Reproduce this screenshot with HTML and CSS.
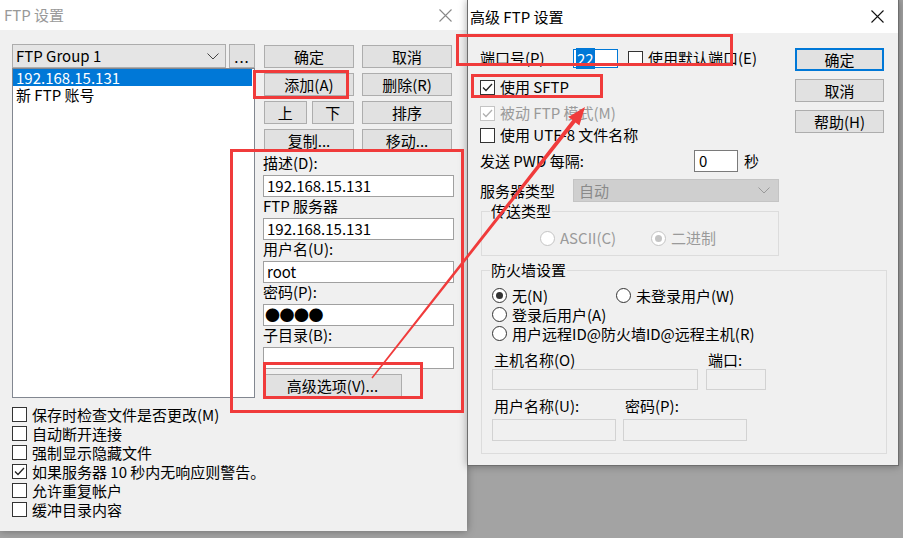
FILE: index.html
```html
<!DOCTYPE html>
<html>
	<head>
		<meta charset="UTF-8" />
		<title>FTP 设置</title>
		<link rel="stylesheet" href="styles.css">
	</head>
	<body>

<div class="win win-main">
  <div class="titlebar inactive">
    <span class="title">FTP 设置</span>
    <svg class="close" width="13" height="13" viewBox="0 0 13 13"><path d="M0.5 0.5 L12.5 12.5 M12.5 0.5 L0.5 12.5" /></svg>
  </div>
  <div class="main-body">
    <div class="main-cols">
      <div class="site-col">
        <div class="combo-row">
          <div class="combo">
            <span>FTP Group 1</span>
            <svg width="12" height="7" viewBox="0 0 12 7"><path d="M0.5 0.5 L6 6 L11.5 0.5" /></svg>
          </div>
          <div class="btn btn-dots">...</div>
        </div>
        <ul class="listbox">
          <li class="sel">192.168.15.131</li>
          <li>新 FTP 账号</li>
        </ul>
      </div>
      <div class="edit-col">
        <div class="btn-grid">
          <div class="btn">确定</div>
          <div class="btn">取消</div>
          <div class="btn">添加(A)</div>
          <div class="btn">删除(R)</div>
          <div class="btn-pair">
            <div class="btn">上</div>
            <div class="btn">下</div>
          </div>
          <div class="btn">排序</div>
          <div class="btn">复制...</div>
          <div class="btn">移动...</div>
        </div>
        <div class="fields">
          <div class="field-label">描述(D):</div>
          <div class="field-input">192.168.15.131</div>
          <div class="field-label">FTP 服务器</div>
          <div class="field-input">192.168.15.131</div>
          <div class="field-label">用户名(U):</div>
          <div class="field-input">root</div>
          <div class="field-label">密码(P):</div>
          <div class="field-input pw">●●●●</div>
          <div class="field-label">子目录(B):</div>
          <div class="field-input"></div>
          <div class="btn btn-adv">高级选项(V)...</div>
        </div>
      </div>
    </div>
    <div class="opts">
      <div class="chk"><span class="box"></span>保存时检查文件是否更改(M)</div>
      <div class="chk"><span class="box"></span>自动断开连接</div>
      <div class="chk"><span class="box"></span>强制显示隐藏文件</div>
      <div class="chk"><span class="box on"><svg width="13" height="13" viewBox="0 0 13 13"><path d="M2 6.5 L5 9.5 L11 3" /></svg></span>如果服务器 10 秒内无响应则警告。</div>
      <div class="chk"><span class="box"></span>允许重复帐户</div>
      <div class="chk"><span class="box"></span>缓冲目录内容</div>
    </div>
  </div>
</div>

<div class="win win-adv">
  <div class="titlebar adv-titlebar">
    <span class="title">高级 FTP 设置</span>
    <svg class="close" width="13" height="13" viewBox="0 0 13 13"><path d="M0.5 0.5 L12.5 12.5 M12.5 0.5 L0.5 12.5" /></svg>
  </div>
  <div class="adv-body">
    <div class="adv-top">
      <div class="adv-left">
        <div class="row r-port">
          <span class="lbl-93">端口号(P)</span>
          <span class="port-input"><span class="hl">22</span></span>
          <span class="chk inline"><span class="box"></span>使用默认端口(E)</span>
        </div>
        <div class="row r-sftp">
          <span class="chk"><span class="box on"><svg width="13" height="13" viewBox="0 0 13 13"><path d="M2 6.5 L5 9.5 L11 3" /></svg></span>使用 SFTP</span>
        </div>
        <div class="row r-pasv">
          <span class="chk dis"><span class="box on"><svg width="13" height="13" viewBox="0 0 13 13"><path d="M2 6.5 L5 9.5 L11 3" /></svg></span>被动 FTP 模式(M)</span>
        </div>
        <div class="row r-utf">
          <span class="chk"><span class="box"></span>使用 UTF-8 文件名称</span>
        </div>
        <div class="row r-pwd">
          <span class="lbl-214">发送 PWD 每隔:</span>
          <span class="num-input">0</span>
          <span class="sec">秒</span>
        </div>
        <div class="row r-type">
          <span class="lbl-93">服务器类型</span>
          <span class="combo dis-combo">
            <span>自动</span>
            <svg width="12" height="7" viewBox="0 0 12 7"><path d="M0.5 0.5 L6 6 L11.5 0.5" /></svg>
          </span>
        </div>
        <fieldset class="group g-xfer">
          <legend>传送类型</legend>
          <div class="radio-row xfer-row">
            <span class="opt w-111 dis"><span class="radio"></span>ASCII(C)</span>
            <span class="opt dis"><span class="radio on"></span>二进制</span>
          </div>
        </fieldset>
      </div>
      <div class="adv-btns">
        <div class="btn btn-default">确定</div>
        <div class="btn">取消</div>
        <div class="btn">帮助(H)</div>
      </div>
    </div>
    <fieldset class="group g-fw">
      <legend>防火墙设置</legend>
      <div class="radio-row">
        <span class="opt w-124"><span class="radio on"></span>无(N)</span>
        <span class="opt"><span class="radio"></span>未登录用户(W)</span>
      </div>
      <div class="radio-row">
        <span class="opt"><span class="radio"></span>登录后用户(A)</span>
      </div>
      <div class="radio-row">
        <span class="opt"><span class="radio"></span>用户远程ID@防火墙ID@远程主机(R)</span>
      </div>
      <div class="fw-fields fw-host">
        <div class="fw-field w-206">
          <div class="fw-label">主机名称(O)</div>
          <div class="field-input dis h-21"></div>
        </div>
        <div class="fw-field w-60">
          <div class="fw-label">端口:</div>
          <div class="field-input dis h-21"></div>
        </div>
      </div>
      <div class="fw-fields fw-user">
        <div class="fw-field w-124">
          <div class="fw-label">用户名称(U):</div>
          <div class="field-input dis"></div>
        </div>
        <div class="fw-field w-124">
          <div class="fw-label">密码(P):</div>
          <div class="field-input dis"></div>
        </div>
      </div>
    </fieldset>
  </div>
</div>

<!-- red annotations on top of the screenshot -->
<div class="mark mk-add"></div>
<div class="mark mk-fields"></div>
<div class="mark mk-advbtn"></div>
<div class="mark mk-port"></div>
<div class="mark mk-sftp"></div>
<svg class="arrow" width="903" height="538" viewBox="0 0 903 538">
  <polygon points="372.6,378.5 575.5,122.4 579.4,125.5 585,107 568.4,116.9 572.3,120.0 371.4,377.5" />
</svg>

	</body>
</html>
```

FILE: styles.css
```css
* {
	margin: 0;
	padding: 0;
	box-sizing: border-box;
}

body {
	width: 903px;
	height: 538px;
	position: relative;
	overflow: hidden;
	background-color: #a3a3a3;
	font-family: "Noto Sans CJK SC", sans-serif;
	font-size: 15px;
	line-height: 18px;
	color: #000;
}

.win {
	position: absolute;
	top: 0;
	background-color: #f0f0f0;
	box-shadow: 0 0 8px rgba(0, 0, 0, 0.35);
}

.win-main {
	left: 0;
	width: 467px;
	height: 531px;
}

.win-adv {
	left: 467px;
	width: 432px;
	height: 466px;
	border: 1px solid #6e6e6e;
	border-top: none;
}

/* title bars */
.titlebar {
	height: 30px;
	background-color: #fff;
	display: flex;
	align-items: center;
	justify-content: space-between;
	padding: 0 15px 0 4px;
}

.titlebar .close path {
	stroke: #111;
	stroke-width: 1.1;
	fill: none;
}

.titlebar.inactive .title {
	color: #999;
}

.titlebar.inactive .close path {
	stroke: #888;
}

.adv-titlebar {
	height: 33px;
	padding: 0 14px 0 2px;
}

/* buttons */
.btn {
	background-color: #e1e1e1;
	border: 1px solid #adadad;
	height: 23px;
	display: flex;
	align-items: center;
	justify-content: center;
	white-space: nowrap;
}

.btn-default {
	border: 2px solid #0078d7;
}

/* combo */
.combo {
	display: flex;
	align-items: center;
	justify-content: space-between;
	background-color: #e5e5e5;
	border: 1px solid #acacac;
	padding: 0 6px 0 3px;
}

.combo path {
	stroke: #444;
	stroke-width: 1;
	fill: none;
}

/* main window */
.main-body {
	padding: 14px 0 0 12px;
}

.main-cols {
	display: grid;
	grid-template-columns: 243px 191px;
	column-gap: 8px;
}

.combo-row {
	display: flex;
	gap: 3px;
	height: 24px;
}

.combo-row .combo {
	width: 214px;
}

.btn-dots {
	width: 26px;
	height: 24px;
	align-items: flex-end;
	padding-bottom: 3px;
	letter-spacing: 1px;
	line-height: 14px;
}

.listbox {
	list-style: none;
	height: 330px;
	background-color: #fff;
	border: 1px solid #828790;
}

.listbox li {
	line-height: 17px;
	padding-left: 3px;
	margin-right: 2px;
}

.listbox li.sel {
	background-color: #0078d7;
	color: #fff;
}

.edit-col {
	padding-top: 1px;
}

.btn-grid {
	display: grid;
	grid-template-columns: 90px 90px;
	grid-auto-rows: 23px;
	gap: 5px 8px;
	padding-left: 1px;
}

.btn-pair {
	display: flex;
	gap: 5px;
}

.btn-pair .btn {
	flex: 1;
}

.fields {
	margin-top: 2px;
}

.field-label {
	height: 21px;
	line-height: 18px;
	white-space: nowrap;
}

.field-input {
	height: 22px;
	background-color: #fff;
	border: 1px solid #a0a0a0;
	padding-left: 3px;
	line-height: 20px;
}

.field-input.pw {
	padding-left: 1px;
	font-size: 15px;
	line-height: 19px;
	letter-spacing: -0.5px;
}

.field-input.dis {
	background-color: #f0f0f0;
	border-color: #d2d2d2;
}

.field-input.h-21 {
	height: 21px;
}

.btn-adv {
	margin-top: 5px;
	width: 139px;
}

/* checkboxes */
.opts {
	margin-top: 7px;
}

.chk {
	display: flex;
	align-items: center;
	gap: 5px;
	height: 19px;
	white-space: nowrap;
}

.chk.inline {
	display: inline-flex;
	margin-left: 10px;
}

.box {
	width: 15px;
	height: 15px;
	flex: none;
	background-color: #fff;
	border: 1px solid #333;
	display: flex;
	align-items: center;
	justify-content: center;
}

.box path {
	stroke: #222;
	stroke-width: 1.3;
	fill: none;
}

.chk.dis {
	color: #9a9a9a;
}

.chk.dis .box {
	border-color: #c4c4c4;
}

.chk.dis .box path {
	stroke: #b0b0b0;
}

/* advanced window */
.adv-body {
	padding-left: 12px;
}

.adv-top {
	display: flex;
}

.adv-left {
	width: 299px;
}

.adv-btns {
	margin-left: 16px;
	padding-top: 15px;
	width: 89px;
	display: flex;
	flex-direction: column;
	gap: 8px;
}

.row {
	display: flex;
	align-items: center;
	white-space: nowrap;
}

.r-port {
	margin-top: 15px;
	height: 20px;
}

.r-sftp {
	margin-top: 9px;
	height: 20px;
}

.r-pasv {
	margin-top: 6px;
	height: 20px;
}

.r-utf {
	margin-top: 2px;
	height: 20px;
}

.r-pwd {
	margin-top: 5px;
	height: 22px;
}

.r-type {
	margin-top: 7px;
	height: 23px;
}

.lbl-93 {
	width: 93px;
	flex: none;
}

.lbl-214 {
	width: 214px;
	flex: none;
}

.port-input {
	width: 45px;
	height: 19px;
	background-color: #fff;
	border: 1px solid #0078d7;
	padding-left: 2px;
	line-height: 17px;
}

.hl {
	background-color: #0078d7;
	color: #fff;
	padding: 0 1px;
}

.num-input {
	width: 44px;
	height: 22px;
	background-color: #fff;
	border: 1px solid #7a7a7a;
	padding-left: 4px;
	line-height: 20px;
}

.sec {
	margin-left: 6px;
}

.dis-combo {
	width: 206px;
	height: 23px;
	background-color: #cfcfcf;
	border-color: #c4c4c4;
	color: #8a8a8a;
	padding-left: 5px;
	padding-right: 8px;
}

.dis-combo path {
	stroke: #999;
}

/* group boxes */
.group {
	border: 1px solid #dcdcdc;
	min-inline-size: 0;
	padding: 0 0 0 10px;
}

.group legend {
	padding: 0 1px;
	margin-left: -2px;
	line-height: 16px;
}

.g-xfer {
	margin: 1px 0 0 1px;
	width: 298px;
	padding-top: 11px;
	padding-bottom: 9px;
}

.radio-row {
	display: flex;
	align-items: center;
	height: 19px;
	white-space: nowrap;
}

.xfer-row {
	height: 16px;
	padding-left: 48px;
}

.opt {
	display: flex;
	align-items: center;
	gap: 5px;
}

.opt.dis {
	color: #9a9a9a;
}

.w-111 {
	width: 111px;
}

.w-124 {
	width: 124px;
	flex: none;
}

.w-206 {
	width: 206px;
	flex: none;
}

.w-60 {
	width: 60px;
	flex: none;
}

.radio {
	width: 15px;
	height: 15px;
	flex: none;
	border-radius: 50%;
	background-color: #fff;
	border: 1px solid #333;
	display: flex;
	align-items: center;
	justify-content: center;
}

.radio.on::after {
	content: "";
	width: 7px;
	height: 7px;
	border-radius: 50%;
	background-color: #333;
}

.opt.dis .radio {
	border-color: #c4c4c4;
}

.opt.dis .radio.on::after {
	background-color: #c4c4c4;
}

.g-fw {
	margin: 6px 0 0 1px;
	width: 406px;
	padding-top: 8px;
	padding-bottom: 12px;
}

.fw-fields {
	display: flex;
	white-space: nowrap;
}

.fw-host {
	margin-top: 8px;
	gap: 8px;
}

.fw-user {
	margin-top: 7px;
	gap: 7px;
}

.fw-label {
	height: 18px;
	line-height: 18px;
	padding-left: 2px;
}

.fw-user .fw-label {
	height: 22px;
}

/* annotations */
.mark {
	position: absolute;
	border: 3px solid #f03b3b;
}

.mk-add {
	left: 253px;
	top: 70px;
	width: 96px;
	height: 29px;
}

.mk-fields {
	left: 230px;
	top: 149px;
	width: 234px;
	height: 264px;
}

.mk-advbtn {
	left: 263px;
	top: 362px;
	width: 160px;
	height: 37px;
}

.mk-port {
	left: 456px;
	top: 34px;
	width: 277px;
	height: 32px;
}

.mk-sftp {
	left: 471px;
	top: 74px;
	width: 132px;
	height: 24px;
}

.arrow {
	position: absolute;
	left: 0;
	top: 0;
}

.arrow polygon {
	fill: #f03b3b;
}
```
